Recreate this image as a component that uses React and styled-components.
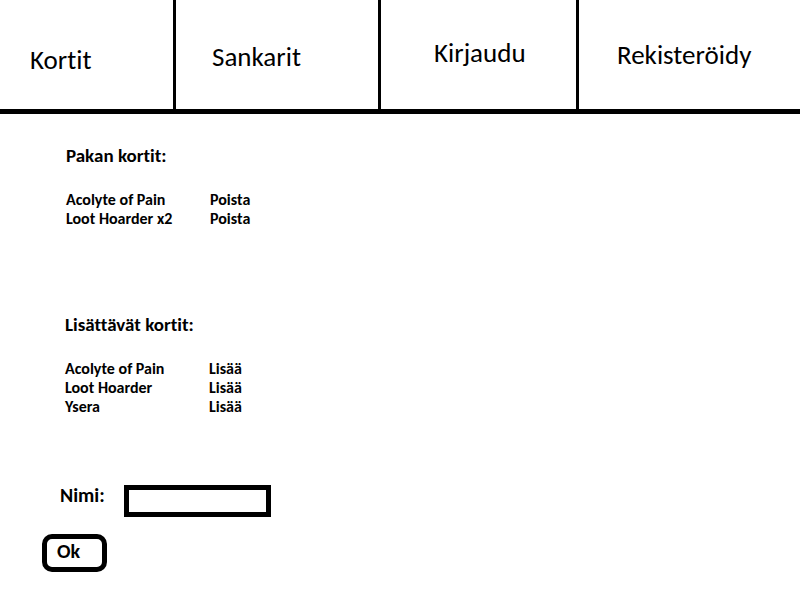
import React from "react";
import styled, { createGlobalStyle } from "styled-components";

const GlobalStyle = createGlobalStyle`
  * { box-sizing: border-box; }
  body {
    margin: 0;
    background: #fff;
    color: #000;
    font-family: Calibri, Carlito, Lato, sans-serif;
    font-variant-ligatures: none;
  }
`;

const NavBar = styled.nav`
  display: grid;
  grid-template-columns: 176fr 205fr 198fr 221fr;
  border-bottom: 5px solid #000;
`;

const NavLink = styled.a`
  height: 109px;
  padding-top: ${(p) => p.$top}px;
  padding-left: ${(p) => p.$left}px;
  border-right: 3px solid #000;
  color: #000;
  font-size: 27px;
  line-height: 30px;
  text-decoration: none;
  white-space: nowrap;

  &:last-child { border-right: 0; }
`;

const Main = styled.main`
  padding: 32px 42px 28px;
  font-weight: 700;
`;

const CardSection = styled.section`
  min-height: ${(p) => p.$minHeight}px;
  padding-left: ${(p) => p.$indent}px;
`;

const Heading = styled.h2`
  margin: 0 0 24px;
  font-size: 19px;
  line-height: 20px;
`;

const CardTable = styled.table`
  border-collapse: collapse;
  font-size: 16px;
  line-height: 19px;

  td { padding: 0; }
  td:first-child { width: 144px; }
`;

const RowButton = styled.button`
  display: block;
  padding: 0;
  border: 0;
  background: none;
  color: inherit;
  font: inherit;
  cursor: pointer;
`;

const NameRow = styled.div`
  display: flex;
  gap: 17px;
  padding-left: 18px;
`;

const NameLabel = styled.label`
  width: 47px;
  font-size: 20px;
  line-height: 20px;
`;

const NameInput = styled.input`
  width: 147px;
  height: 32px;
  padding: 0 6px;
  border: 5px solid #000;
  border-radius: 0;
  background: #fff;
  font: inherit;
`;

const OkButton = styled.button`
  width: 65px;
  height: 38px;
  margin-top: 17px;
  padding: 0 0 4px 10px;
  border: 5px solid #000;
  border-radius: 10px;
  background: #fff;
  color: #000;
  font: inherit;
  font-size: 20px;
  line-height: 20px;
  text-align: left;
  cursor: pointer;
`;

const links = [
  { label: "Kortit", top: 45, left: 30 },
  { label: "Sankarit", top: 42, left: 36 },
  { label: "Kirjaudu", top: 38, left: 53 },
  { label: "Rekisteröidy", top: 40, left: 38 },
];

function CardList({ title, cards, action, minHeight, indent }) {
  return (
    <CardSection $minHeight={minHeight} $indent={indent}>
      <Heading>{title}</Heading>
      <CardTable>
        <tbody>
          {cards.map((card) => (
            <tr key={card}>
              <td>{card}</td>
              <td>
                <RowButton type="button" aria-label={`${action} ${card}`}>{action}</RowButton>
              </td>
            </tr>
          ))}
        </tbody>
      </CardTable>
    </CardSection>
  );
}

export default function App() {
  return (
    <>
      <GlobalStyle />
      <NavBar>
        {links.map((l) => (
          <NavLink key={l.label} href="#" $top={l.top} $left={l.left}>{l.label}</NavLink>
        ))}
      </NavBar>
      <Main>
        <CardList
          title="Pakan kortit:"
          cards={["Acolyte of Pain", "Loot Hoarder x2"]}
          action="Poista"
          minHeight={169}
          indent={24}
        />
        <CardList
          title="Lisättävät kortit:"
          cards={["Acolyte of Pain", "Loot Hoarder", "Ysera"]}
          action="Lisää"
          minHeight={170}
          indent={23}
        />
        <form onSubmit={(e) => e.preventDefault()}>
          <NameRow>
            <NameLabel htmlFor="nimi">Nimi:</NameLabel>
            <NameInput id="nimi" type="text" />
          </NameRow>
          <OkButton type="submit">Ok</OkButton>
        </form>
      </Main>
    </>
  );
}
